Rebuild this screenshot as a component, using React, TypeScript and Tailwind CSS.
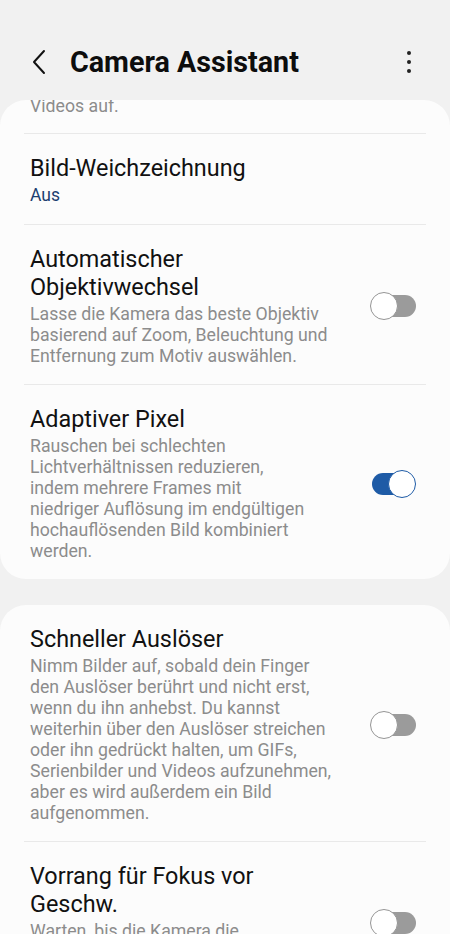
import React from "react";

type Row = {
  title: string[];
  desc?: string[];
  value?: string;
  toggle?: "on" | "off";
};

const card1: Row[] = [
  { title: ["Bild-Weichzeichnung"], value: "Aus" },
  {
    title: ["Automatischer", "Objektivwechsel"],
    desc: [
      "Lasse die Kamera das beste Objektiv",
      "basierend auf Zoom, Beleuchtung und",
      "Entfernung zum Motiv auswählen.",
    ],
    toggle: "off",
  },
  {
    title: ["Adaptiver Pixel"],
    desc: [
      "Rauschen bei schlechten",
      "Lichtverhältnissen reduzieren,",
      "indem mehrere Frames mit",
      "niedriger Auflösung im endgültigen",
      "hochauflösenden Bild kombiniert",
      "werden.",
    ],
    toggle: "on",
  },
];

const card2: Row[] = [
  {
    title: ["Schneller Auslöser"],
    desc: [
      "Nimm Bilder auf, sobald dein Finger",
      "den Auslöser berührt und nicht erst,",
      "wenn du ihn anhebst. Du kannst",
      "weiterhin über den Auslöser streichen",
      "oder ihn gedrückt halten, um GIFs,",
      "Serienbilder und Videos aufzunehmen,",
      "aber es wird außerdem ein Bild",
      "aufgenommen.",
    ],
    toggle: "off",
  },
  {
    title: ["Vorrang für Fokus vor", "Geschw."],
    desc: [
      "Warten, bis die Kamera die",
      "Schärfe eingestellt hat, bevor",
      "ein Bild aufgenommen wird.",
    ],
    toggle: "off",
  },
];

function Toggle({ on }: { on: boolean }) {
  return (
    <div className="relative w-[46px] h-[28px] shrink-0">
      <div
        className={`absolute top-[3px] bottom-[3px] rounded-full ${
          on ? "left-[2px] right-[4px] bg-[#1e5ba6]" : "left-[4px] right-0 bg-[#9b9b9b]"
        }`}
      />
      <div
        className={`absolute top-0 w-[28px] h-[28px] rounded-full bg-white border-[1.5px] ${
          on ? "right-0 border-[#1e5ba6]" : "left-0 border-[#959595]"
        }`}
      />
    </div>
  );
}

function SettingRow({ row }: { row: Row }) {
  return (
    <div className={`flex items-center px-[30px] pt-[20px] ${row.value ? "pb-[16px]" : "pb-[17px]"}`}>
      <div className="flex-1 min-w-0">
        {row.title.map((t) => (
          <div key={t} className="text-[23.4px] leading-[28px] text-[#111111] whitespace-nowrap">
            {t}
          </div>
        ))}
        {row.value && (
          <div className="text-[17.5px] leading-[26px] text-[#1b3f70]">{row.value}</div>
        )}
        {row.desc && (
          <div className="mt-[3px]">
            {row.desc.map((d) => (
              <div key={d} className="text-[17.7px] leading-[21px] text-[#8c8c8c] whitespace-nowrap">
                {d}
              </div>
            ))}
          </div>
        )}
      </div>
      {row.toggle && (
        <div className="pr-[4px]">
          <Toggle on={row.toggle === "on"} />
        </div>
      )}
    </div>
  );
}

function Divider() {
  return <div className="mx-[24px] h-px bg-[#e9e9e9]" />;
}

export default function App() {
  return (
    <div
      className="min-h-[934px] bg-[#f1f1f1]"
      style={{ fontFamily: "Roboto, 'Noto Sans', sans-serif" }}
    >
      {/* Header */}
      <div className="h-[100px] flex items-center pt-[24px]">
        <div className="w-[70px] flex items-center justify-center">
          <svg width="16" height="26" viewBox="0 0 16 26" className="ml-[8px]">
            <path d="M13 2 L3 13 L13 24" fill="none" stroke="#111" strokeWidth="2" strokeLinecap="round" strokeLinejoin="round" />
          </svg>
        </div>
        <h1 className="flex-1 text-[28.7px] font-bold text-[#0d0d0d] leading-[34px] -mt-[1px]">
          Camera Assistant
        </h1>
        <div className="w-[82px] flex flex-col items-center gap-[5px]">
          <span className="w-[4px] h-[4px] rounded-full bg-[#222]" />
          <span className="w-[4px] h-[4px] rounded-full bg-[#222]" />
          <span className="w-[4px] h-[4px] rounded-full bg-[#222]" />
        </div>
      </div>

      {/* Card 1 */}
      <div className="bg-[#fcfcfc] rounded-[26px] overflow-hidden">
        <div className="-mt-[4px] px-[30px] pb-[16px] text-[17.7px] leading-[21px] text-[#8c8c8c]">
          Videos auf.
        </div>
        {card1.map((r, i) => (
          <div key={i}>
            <Divider />
            <SettingRow row={r} />
          </div>
        ))}
      </div>

      {/* Card 2 */}
      <div className="mt-[26px] bg-[#fcfcfc] rounded-[26px] overflow-hidden">
        {card2.map((r, i) => (
          <div key={i}>
            {i > 0 && <Divider />}
            <SettingRow row={r} />
          </div>
        ))}
      </div>
    </div>
  );
}
